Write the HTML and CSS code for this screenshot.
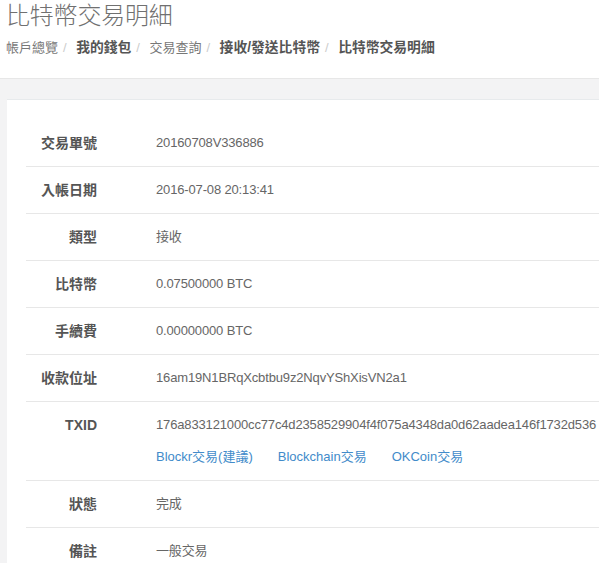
FILE: index.html
```html
<!DOCTYPE html>
<html lang="zh-Hant">
<head>
<meta charset="utf-8">
<title>比特幣交易明細</title>
<link rel="stylesheet" href="styles.css">
</head>
<body>
<header class="page-head">
  <h1 class="title">比特幣交易明細</h1>
  <ol class="crumbs">
    <li class="crumb">帳戶總覽</li>
    <li class="crumb strong">我的錢包</li>
    <li class="crumb">交易查詢</li>
    <li class="crumb strong">接收/發送比特幣</li>
    <li class="crumb strong last">比特幣交易明細</li>
  </ol>
</header>
<main class="main">
  <section class="card">
    <table class="detail">
      <tr><th>交易單號</th><td>20160708V336886</td></tr>
      <tr><th>入帳日期</th><td>2016-07-08 20:13:41</td></tr>
      <tr><th>類型</th><td>接收</td></tr>
      <tr><th>比特幣</th><td>0.07500000 BTC</td></tr>
      <tr><th>手續費</th><td>0.00000000 BTC</td></tr>
      <tr><th>收款位址</th><td>16am19N1BRqXcbtbu9z2NqvYShXisVN2a1</td></tr>
      <tr class="tx"><th>TXID</th><td>
        <div class="hash">176a833121000cc77c4d2358529904f4f075a4348da0d62aadea146f1732d536</div>
        <div class="links"><a class="link">Blockr交易(建議)</a><a class="link">Blockchain交易</a><a class="link">OKCoin交易</a></div>
      </td></tr>
      <tr><th>狀態</th><td>完成</td></tr>
      <tr><th>備註</th><td>一般交易</td></tr>
    </table>
  </section>
</main>
</body>
</html>
```
FILE: styles.css
```css
html, body {
  margin: 0;
  padding: 0;
  background: #fff;
  font-family: "Liberation Sans", Arial, "Noto Sans CJK TC", sans-serif;
  color: #676a6c;
  overflow: hidden;
  height: 563px;
}
.page-head {
  padding: 0 6px;
  height: 78px;
  box-sizing: border-box;
}
.title {
  margin: 0;
  font-size: 24px;
  font-weight: 300;
  line-height: 32px;
  color: #707070;
  letter-spacing: -0.2px;
}
.crumbs {
  list-style: none;
  margin: 6px 0 0;
  padding: 0;
  display: flex;
  align-items: baseline;
  font-size: 13px;
  line-height: 20px;
  color: #777;
}
.crumb::after {
  content: "/";
  color: #ccc;
  font-weight: normal;
  font-size: 13px;
  padding: 0 9.5px 0 5px;
}
.crumb.last::after { content: none; }
.crumb.strong {
  font-weight: bold;
  font-size: 13.8px;
  color: #555;
}
.main {
  background: #f3f3f4;
  border-top: 1px solid #e7e7e7;
  padding: 20px 0 0 7px;
  height: 600px;
}
.card {
  background: #fff;
  border-top: 1px solid #e7eaec;
  padding: 20px 0 0 19px;
  height: 600px;
}
.detail {
  border-collapse: collapse;
  width: 100%;
}
.detail th, .detail td {
  border-bottom: 1px solid #e7e7e7;
  padding: 13px 0;
  line-height: 20px;
  vertical-align: top;
}
.detail th {
  width: 71px;
  padding-right: 30px;
  text-align: right;
  font-size: 14px;
  font-weight: bold;
  color: #555;
  white-space: nowrap;
}
.detail td {
  padding-left: 29px;
  font-size: 13px;
  color: #666;
  letter-spacing: -0.15px;
  white-space: nowrap;
}
.links {
  margin-top: 12px;
  display: flex;
  gap: 25px;
  letter-spacing: 0;
}
.link {
  color: #428bca;
  text-decoration: none;
  cursor: pointer;
  font-size: 13px;
}
```
